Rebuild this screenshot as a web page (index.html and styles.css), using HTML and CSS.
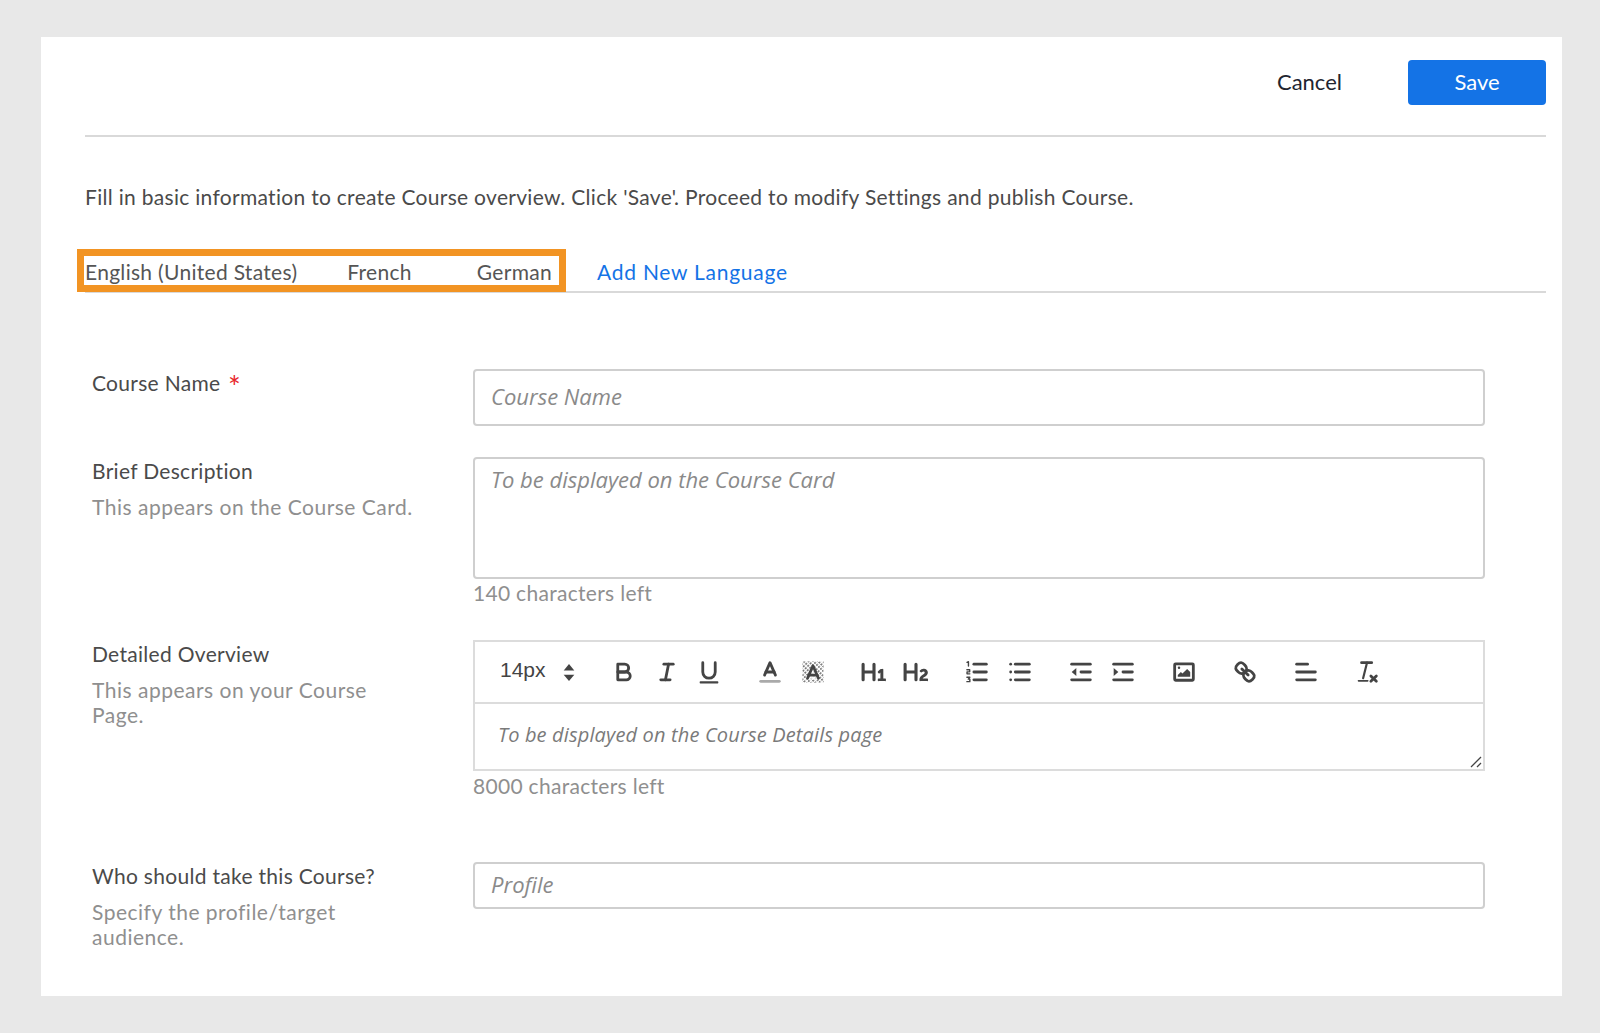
FILE: index.html
```html
<!DOCTYPE html>
<html lang="en">
<head>
    <meta charset="UTF-8">
    <meta name="viewport" content="width=device-width, initial-scale=1.0">
    <title>Course Overview</title>
    <link rel="stylesheet" href="styles.css">
</head>
<body>
    <main class="card">
        <!-- Top actions -->
        <header class="actions">
            <a class="cancel-link" href="#">Cancel</a>
            <button class="save-btn" type="button">Save</button>
        </header>

        <p class="intro">Fill in basic information to create Course overview. Click 'Save'. Proceed to modify Settings and publish Course.</p>

        <!-- Language tabs -->
        <nav class="tabs">
            <div class="tabs-highlight">
                <a class="tab" href="#">English (United States)</a>
                <a class="tab" href="#">French</a>
                <a class="tab tab-last" href="#">German</a>
            </div>
            <a class="tab-add" href="#">Add New Language</a>
        </nav>

        <form class="course-form">
            <!-- Course Name -->
            <div class="row row-name">
                <div class="label-col">
                    <label class="field-label" for="course_name">Course Name <span class="required">*</span></label>
                </div>
                <div class="field-col">
                    <input class="text-input input-tall" type="text" id="course_name" placeholder="Course Name">
                </div>
            </div>

            <!-- Brief Description -->
            <div class="row row-brief">
                <div class="label-col">
                    <label class="field-label" for="brief">Brief Description</label>
                    <p class="hint">This appears on the Course Card.</p>
                </div>
                <div class="field-col">
                    <textarea class="text-input text-area" id="brief" placeholder="To be displayed on the Course Card"></textarea>
                    <div class="counter">140 characters left</div>
                </div>
            </div>

            <!-- Detailed Overview -->
            <div class="row row-detail">
                <div class="label-col">
                    <div class="field-label">Detailed Overview</div>
                    <p class="hint">This appears on your Course Page.</p>
                </div>
                <div class="field-col">
                    <div class="editor">
                        <div class="toolbar">
                            <div class="size-picker">
                                <span class="size-value">14px</span>
                                <svg class="stepper" viewBox="0 0 10 16"><polygon points="5 0 10 6 0 6"/><polygon points="0 10 10 10 5 16"/></svg>
                            </div>
                            <div class="tool-group tool-group-first">
                                <button class="tool" type="button" title="Bold"><svg viewBox="0 0 18 18"><path class="st" d="M5,4H9.5A2.5,2.5,0,0,1,12,6.5v0A2.5,2.5,0,0,1,9.5,9H5V4Z"/><path class="st" d="M5,9h5.5A2.5,2.5,0,0,1,13,11.5v0A2.5,2.5,0,0,1,10.5,14H5V9Z"/></svg></button>
                                <button class="tool" type="button" title="Italic"><svg viewBox="0 0 18 18"><line class="st" x1="7" x2="13" y1="4" y2="4"/><line class="st" x1="5" x2="11" y1="14" y2="14"/><line class="st" x1="8" x2="10" y1="14" y2="4"/></svg></button>
                                <button class="tool" type="button" title="Underline"><svg viewBox="0 0 18 18"><path class="st" d="M5,3V9a4,4,0,0,0,4,4H9a4,4,0,0,0,4-4V3"/><rect class="fl" height="1.4" rx="0.5" width="12" x="3" y="15"/></svg></button>
                            </div>
                            <div class="tool-group">
                                <button class="tool" type="button" title="Text color"><svg viewBox="0 0 18 18"><line class="st label-line" x1="3" x2="15" y1="15" y2="15"/><polyline class="st" points="5.5 11 9 3 12.5 11"/><line class="st" x1="11.63" x2="6.38" y1="9" y2="9"/></svg></button>
                                <button class="tool" type="button" title="Background"><svg viewBox="0 0 18 18"><defs><pattern id="dither" width="2.2" height="1.8" patternUnits="userSpaceOnUse" patternTransform="rotate(-45)"><rect class="dither-dot" width="1.3" height="1"/></pattern></defs><rect x="2.2" y="2.2" width="13.6" height="13.6" fill="url(#dither)"/><polygon class="knock" points="9 4.5 13.5 14 4.5 14"/><polyline class="st" points="5.5 13 9 5 12.5 13"/><line class="st" x1="11.63" x2="6.38" y1="11" y2="11"/></svg></button>
                            </div>
                            <div class="tool-group">
                                <button class="tool" type="button" title="Heading 1"><svg viewBox="0 0 18 18"><path class="fl" d="M10,4V14a1,1,0,0,1-2,0V10H3v4a1,1,0,0,1-2,0V4A1,1,0,0,1,3,4V8H8V4a1,1,0,0,1,2,0Zm6.06787,9.209H14.98975V7.59863a.54085.54085,0,0,0-.605-.60547h-.62744a1.01119,1.01119,0,0,0-.748.29688L11.645,8.56641a.5435.5435,0,0,0-.022.8584l.28613.30762a.53861.53861,0,0,0,.84717.0332l.09912-.08789a1.2137,1.2137,0,0,0,.2417-.35254h.02246s-.01123.30859-.01123.60547V13.209H12.041a.54085.54085,0,0,0-.605.60547v.43945a.54085.54085,0,0,0,.605.60547h4.02686a.54085.54085,0,0,0,.605-.60547v-.43945A.54085.54085,0,0,0,16.06787,13.209Z"/></svg></button>
                                <button class="tool" type="button" title="Heading 2"><svg viewBox="0 0 18 18"><path class="fl" d="M16.73975,13.81445v.43945a.54085.54085,0,0,1-.605.60547H11.855a.58392.58392,0,0,1-.64893-.60547V14.0127c0-2.90527,3.39941-3.42187,3.39941-4.55469a.77675.77675,0,0,0-.84717-.78125,1.17684,1.17684,0,0,0-.83594.38477c-.2749.26367-.561.374-.85791.13184l-.4292-.34082c-.30811-.24219-.38525-.51758-.1543-.81445a2.97155,2.97155,0,0,1,2.45361-1.17676,2.45393,2.45393,0,0,1,2.68408,2.40918c0,2.45312-3.1792,2.92676-3.27832,3.93848h2.79443A.54085.54085,0,0,1,16.73975,13.81445ZM9,3A.99974.99974,0,0,0,8,4V8H3V4A1,1,0,0,0,1,4V14a1,1,0,0,0,2,0V10H8v4a1,1,0,0,0,2,0V4A.99974.99974,0,0,0,9,3Z"/></svg></button>
                            </div>
                            <div class="tool-group">
                                <button class="tool" type="button" title="Numbered list"><svg viewBox="0 0 18 18"><line class="st" x1="7" x2="15" y1="4" y2="4"/><line class="st" x1="7" x2="15" y1="9" y2="9"/><line class="st" x1="7" x2="15" y1="14" y2="14"/><path class="st-thin" d="M2.6,2.8 3.5,2.4V5.2M2.5,7.6H4.3V8.9H2.6V10.2H4.4M2.5,12.4H4.4L3.4,13.6H4.4V15.2H2.5"/></svg></button>
                                <button class="tool" type="button" title="Bullet list"><svg viewBox="0 0 18 18"><line class="st" x1="6" x2="15" y1="4" y2="4"/><line class="st" x1="6" x2="15" y1="9" y2="9"/><line class="st" x1="6" x2="15" y1="14" y2="14"/><line class="st" x1="3" x2="3" y1="4" y2="4"/><line class="st" x1="3" x2="3" y1="9" y2="9"/><line class="st" x1="3" x2="3" y1="14" y2="14"/></svg></button>
                            </div>
                            <div class="tool-group">
                                <button class="tool" type="button" title="Outdent"><svg viewBox="0 0 18 18"><line class="st" x1="3" x2="15" y1="14" y2="14"/><line class="st" x1="3" x2="15" y1="4" y2="4"/><line class="st" x1="9" x2="15" y1="9" y2="9"/><polygon class="fl" points="6 6.5 6 11.5 3 9"/></svg></button>
                                <button class="tool" type="button" title="Indent"><svg viewBox="0 0 18 18"><line class="st" x1="3" x2="15" y1="14" y2="14"/><line class="st" x1="3" x2="15" y1="4" y2="4"/><line class="st" x1="9" x2="15" y1="9" y2="9"/><polygon class="fl" points="3 6.5 3 11.5 6 9"/></svg></button>
                            </div>
                            <div class="tool-group">
                                <button class="tool" type="button" title="Image"><svg viewBox="0 0 18 18"><rect class="st" height="10.5" rx="0.6" width="12" x="3" y="3.8"/><circle class="fl" cx="5.8" cy="6.2" r="0.8"/><polygon class="fl" points="5 12 5 11 7 9 8 10 11 7 13 9 13 12"/></svg></button>
                            </div>
                            <div class="tool-group">
                                <button class="tool" type="button" title="Link"><svg viewBox="0 0 18 18"><line class="st" x1="7" x2="11" y1="7" y2="11"/><path class="st" d="M8.9,4.577a3.476,3.476,0,0,1,.36,4.679A3.476,3.476,0,0,1,4.577,8.9C3.185,7.5,2.035,6.4,4.217,4.217S7.5,3.185,8.9,4.577Z"/><path class="st" d="M13.423,9.1a3.476,3.476,0,0,0-4.679-.36,3.476,3.476,0,0,0,.36,4.679c1.392,1.392,2.5,2.542,4.679.36S14.815,10.5,13.423,9.1Z"/></svg></button>
                            </div>
                            <div class="tool-group">
                                <button class="tool" type="button" title="Align"><svg viewBox="0 0 18 18"><line class="st" x1="3" x2="15" y1="9" y2="9"/><line class="st" x1="3" x2="15" y1="14" y2="14"/><line class="st" x1="3" x2="10" y1="4" y2="4"/></svg></button>
                            </div>
                            <div class="tool-group">
                                <button class="tool" type="button" title="Clear formatting"><svg viewBox="0 0 18 18"><line class="st" x1="5.5" x2="12" y1="3" y2="3"/><line class="st-mid" x1="6.5" x2="9" y1="13" y2="3"/><line class="st" x1="11.5" x2="15" y1="11.5" y2="15"/><line class="st" x1="15" x2="11.5" y1="11.5" y2="15"/><rect class="fl" height="1" rx="0.5" width="7" x="3" y="14.2"/></svg></button>
                            </div>
                        </div>
                        <div class="editor-body">
                            <span class="editor-placeholder">To be displayed on the Course Details page</span>
                            <svg class="resize-grip" viewBox="0 0 12 12"><line x1="1" y1="11" x2="11" y2="1"/><line x1="7" y1="11" x2="11" y2="7"/></svg>
                        </div>
                    </div>
                    <div class="counter">8000 characters left</div>
                </div>
            </div>

            <!-- Target audience -->
            <div class="row row-profile">
                <div class="label-col">
                    <label class="field-label" for="profile">Who should take this Course?</label>
                    <p class="hint">Specify the profile/target audience.</p>
                </div>
                <div class="field-col">
                    <input class="text-input input-short" type="text" id="profile" placeholder="Profile">
                </div>
            </div>
        </form>
    </main>
</body>
</html>
```

FILE: styles.css
```css
/* Page */
body {
    margin: 0;
    padding: 37px 38px 37px 41px;
    background-color: #e8e8e8;
    font-family: Lato, "Open Sans", sans-serif;
    font-size: 21px;
    letter-spacing: 0.3px;
    color: #4a4a4a;
}

.card {
    height: 959px;
    box-sizing: border-box;
    padding: 0 16px 0 44px;
    background-color: #fff;
}

/* Top actions */
.actions {
    display: flex;
    justify-content: flex-end;
    align-items: flex-start;
    height: 100px;
    box-sizing: border-box;
    padding-top: 23px;
    border-bottom: 2px solid #d9d9d9;
}

.cancel-link {
    margin-right: 66px;
    line-height: 43px;
    letter-spacing: 0;
    color: #1f2530;
    text-decoration: none;
    font-size: 22px;
}

.save-btn {
    width: 138px;
    height: 45px;
    padding: 0 0 2px;
    border: none;
    border-radius: 4px;
    background-color: #1473e6;
    color: #fff;
    font-family: inherit;
    font-size: 22px;
}

.intro {
    margin: 46px 0 0;
    line-height: 28px;
    color: #4a4a4a;
}

/* Language tabs */
.tabs {
    display: flex;
    height: 37px;
    box-sizing: border-box;
    margin-top: 45px;
    padding-bottom: 6px;
    border-bottom: 2px solid #d9d9d9;
}

.tabs-highlight {
    display: flex;
    gap: 50px;
    width: 475px;
    height: 29px;
    box-sizing: border-box;
    margin-left: -1px;
    padding-left: 1px;
    line-height: 32px;
    outline: 7px solid #f29423;
}

.tab {
    color: #555;
    text-decoration: none;
    white-space: nowrap;
}

.tab-last {
    margin-left: 15px;
}

.tab-add {
    margin-left: 38px;
    line-height: 32px;
    letter-spacing: 0.75px;
    color: #1473e6;
    text-decoration: none;
}

/* Form rows */
.course-form {
    padding: 0 61px 0 7px;
}

.row {
    display: flex;
}

.row-name {
    margin-top: 76px;
}

.row-brief {
    margin-top: 31px;
}

.row-detail {
    margin-top: 34px;
}

.row-profile {
    margin-top: 63px;
}

.label-col {
    width: 381px;
    flex-shrink: 0;
    padding-top: 1px;
}

.field-col {
    flex: 1;
}

.field-label {
    display: block;
    line-height: 26px;
    color: #4a4a4a;
}

.required {
    margin-left: 2px;
    font-size: 30px;
    line-height: 0;
    vertical-align: -7px;
    color: #e8282b;
}

.hint {
    width: 325px;
    margin: 10px 0 0;
    line-height: 25px;
    letter-spacing: 0.5px;
    color: #8f8f8f;
}

/* Inputs */
.text-input {
    display: block;
    width: 100%;
    box-sizing: border-box;
    padding: 0 16px 3px;
    border: 2px solid #cfcfcf;
    border-radius: 4px;
    background-color: #fff;
    font-family: "Open Sans", sans-serif;
    font-size: 22px;
    font-style: italic;
    color: #4a4a4a;
}

.text-input::placeholder {
    color: #8a8a8a;
    opacity: 1;
}

.input-tall {
    height: 57px;
}

.input-short {
    height: 47px;
}

.text-area {
    height: 122px;
    padding-top: 5px;
    resize: none;
}

.counter {
    margin-top: 1px;
    line-height: 26px;
    color: #8f8f8f;
}

/* Rich text editor */
.editor {
    border: 2px solid #dcdcdc;
    box-sizing: border-box;
    height: 131px;
    display: flex;
    flex-direction: column;
    margin-bottom: 2px;
}

.toolbar {
    display: flex;
    align-items: center;
    height: 62px;
    box-sizing: border-box;
    padding-left: 25px;
    border-bottom: 2px solid #dcdcdc;
}

.size-picker {
    display: flex;
    align-items: center;
    width: 103px;
}

.size-value {
    width: 63px;
    margin-top: -5px;
    font-family: "Liberation Sans", sans-serif;
    font-size: 21px;
    letter-spacing: 0;
    color: #444;
}

.stepper {
    width: 12px;
    height: 17px;
    fill: #444;
}

.tool-group {
    display: flex;
    margin-left: 18.5px;
}

.tool-group-first {
    margin-left: 0;
}

.tool {
    display: flex;
    justify-content: center;
    align-items: center;
    width: 42.5px;
    height: 30px;
    padding: 0;
    border: none;
    background: none;
}

.tool svg {
    width: 28px;
    height: 28px;
}

.st, .st-mid, .st-thin {
    fill: none;
    stroke: #444;
    stroke-width: 1.8;
    stroke-linecap: round;
    stroke-linejoin: round;
}

.st-mid {
    stroke-width: 1.4;
}

.st-thin {
    stroke-width: 0.9;
}

.fl {
    fill: #444;
}

.label-line {
    stroke: #aaa;
}

.dither-dot {
    fill: #666;
}

.knock {
    fill: #fff;
    opacity: 0.7;
}

.editor-body {
    flex: 1;
    position: relative;
    padding: 17px 23px 0;
}

.editor-placeholder {
    font-family: "Open Sans", sans-serif;
    font-size: 20px;
    font-style: italic;
    letter-spacing: 0.15px;
    color: #7a7a7a;
}

.resize-grip {
    position: absolute;
    right: 1px;
    bottom: 1px;
    width: 12px;
    height: 12px;
    stroke: #444;
    stroke-width: 1.3;
}
```
